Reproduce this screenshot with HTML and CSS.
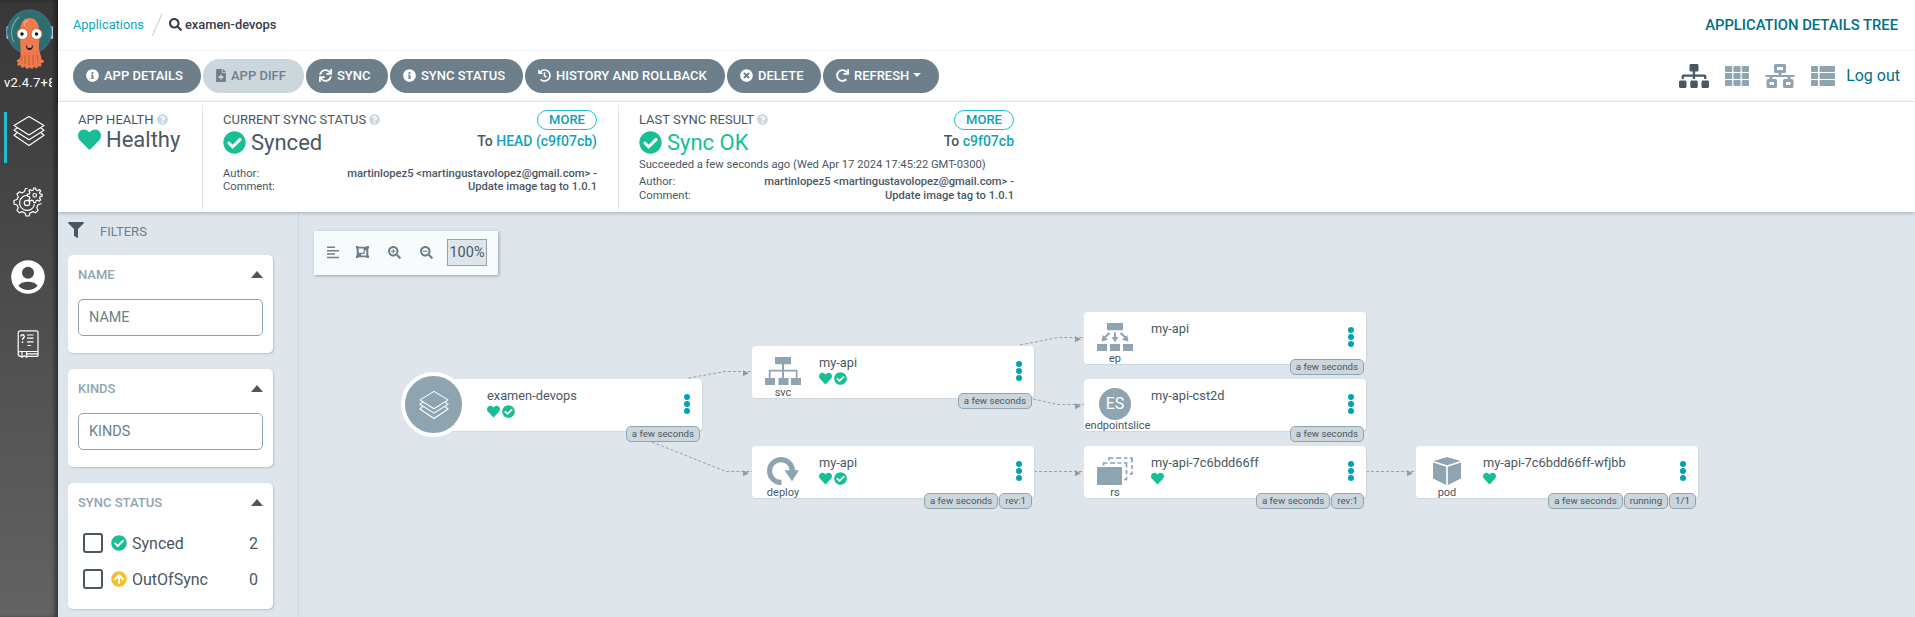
FILE: index.html
```html
<!DOCTYPE html>
<html lang="en">
<head>
<meta charset="utf-8">
<title>examen-devops - Application Details Tree</title>
<link rel="stylesheet" href="styles.css">
</head>
<body>
<svg class="defs" aria-hidden="true">
  <defs>
    <symbol id="info" viewBox="0 0 512 512"><path d="M256 8C119.043 8 8 119.083 8 256c0 136.997 111.043 248 248 248s248-111.003 248-248C504 119.083 392.957 8 256 8zm0 110c23.196 0 42 18.804 42 42s-18.804 42-42 42-42-18.804-42-42 18.804-42 42-42zm56 254c0 6.627-5.373 12-12 12h-88c-6.627 0-12-5.373-12-12v-24c0-6.627 5.373-12 12-12h12v-64h-12c-6.627 0-12-5.373-12-12v-24c0-6.627 5.373-12 12-12h64c6.627 0 12 5.373 12 12v100h12c6.627 0 12 5.373 12 12v24z"/></symbol>
    <symbol id="check" viewBox="0 0 512 512"><path d="M504 256c0 136.967-111.033 248-248 248S8 392.967 8 256 119.033 8 256 8s248 111.033 248 248zM227.314 387.314l184-184c6.248-6.248 6.248-16.379 0-22.627l-22.627-22.627c-6.248-6.249-16.379-6.249-22.628 0L216 308.118l-70.059-70.059c-6.248-6.248-16.379-6.248-22.628 0l-22.627 22.627c-6.248 6.248-6.248 16.379 0 22.627l104 104c6.249 6.249 16.379 6.249 22.628.001z"/></symbol>
    <symbol id="heart" viewBox="0 0 512 512"><path d="M462.3 62.6C407.5 15.9 326 24.3 275.7 76.2L256 96.5l-19.7-20.3C186.1 24.3 104.5 15.9 49.7 62.6c-62.8 53.6-66.1 149.8-9.9 207.9l193.5 199.8c12.5 12.9 32.8 12.9 45.3 0l193.5-199.8c56.3-58.1 53-154.3-9.8-207.9z"/></symbol>
    <symbol id="times" viewBox="0 0 512 512"><path d="M256 8C119 8 8 119 8 256s111 248 248 248 248-111 248-248S393 8 256 8zm121.6 313.1c4.7 4.7 4.7 12.3 0 17L338 377.6c-4.7 4.7-12.3 4.7-17 0L256 312l-65.1 65.6c-4.7 4.7-12.3 4.7-17 0L134.4 338c-4.7-4.7-4.7-12.3 0-17l65.6-65-65.6-65.1c-4.7-4.7-4.7-12.3 0-17l39.6-39.6c4.7-4.7 12.3-4.7 17 0l65 65.7 65.1-65.6c4.7-4.7 12.3-4.7 17 0l39.6 39.6c4.7 4.7 4.7 12.3 0 17L312 256l65.6 65.1z"/></symbol>
    <symbol id="search" viewBox="0 0 512 512"><path d="M505 442.7L405.3 343c-4.5-4.5-10.6-7-17-7H372c27.6-35.3 44-79.7 44-128C416 93.1 322.9 0 208 0S0 93.1 0 208s93.1 208 208 208c48.3 0 92.7-16.4 128-44v16.3c0 6.4 2.5 12.5 7 17l99.7 99.7c9.4 9.4 24.6 9.4 33.9 0l28.3-28.3c9.4-9.4 9.4-24.6.1-34zM208 336c-70.7 0-128-57.2-128-128 0-70.7 57.2-128 128-128 70.7 0 128 57.2 128 128 0 70.7-57.2 128-128 128z"/></symbol>
    <symbol id="question" viewBox="0 0 512 512"><path d="M504 256c0 136.997-111.043 248-248 248S8 392.997 8 256C8 119.083 119.043 8 256 8s248 111.083 248 248zM262.655 90c-54.497 0-89.255 22.957-116.549 63.758-3.536 5.286-2.353 12.415 2.715 16.258l34.699 26.31c5.205 3.947 12.621 3.008 16.665-2.122 17.864-22.658 30.113-35.797 57.303-35.797 20.429 0 45.698 13.148 45.698 32.958 0 14.976-12.363 22.667-32.534 33.976C247.128 238.528 216 254.941 216 296v4c0 6.627 5.373 12 12 12h56c6.627 0 12-5.373 12-12v-1.333c0-28.462 83.186-29.647 83.186-106.667 0-58.002-60.165-102-116.531-102zM256 338c-25.365 0-46 20.635-46 46 0 25.364 20.635 46 46 46s46-20.636 46-46c0-25.365-20.635-46-46-46z"/></symbol>
    <symbol id="filter" viewBox="0 0 512 512"><path d="M487.976 0H24.028C2.71 0-8.047 25.866 7.058 40.971L192 225.941V432c0 7.831 3.821 15.17 10.237 19.662l80 55.98C298.02 518.69 320 507.493 320 487.98V225.941l184.947-184.97C520.021 25.896 509.338 0 487.976 0z"/></symbol>
    <symbol id="sync" viewBox="0 0 512 512"><path d="M440.65 12.57l4 82.77A247.16 247.16 0 0 0 255.83 8C134.73 8 33.91 94.92 12.29 209.82A12 12 0 0 0 24.09 224h49.05a12 12 0 0 0 11.67-9.26 175.91 175.91 0 0 1 317-56.94l-101.46-4.86a12 12 0 0 0-12.57 12v47.41a12 12 0 0 0 12 12H500a12 12 0 0 0 12-12V12a12 12 0 0 0-12-12h-47.37a12 12 0 0 0-11.98 12.57zM255.83 432a175.61 175.61 0 0 1-146-77.8l101.8 4.87a12 12 0 0 0 12.57-12v-47.4a12 12 0 0 0-12-12H12a12 12 0 0 0-12 12V500a12 12 0 0 0 12 12h47.35a12 12 0 0 0 12-12.6l-4.15-82.57A247.17 247.17 0 0 0 255.83 504c121.11 0 221.93-86.92 243.55-201.82a12 12 0 0 0-11.8-14.18h-49.05a12 12 0 0 0-11.67 9.26A175.86 175.86 0 0 1 255.83 432z"/></symbol>
    <symbol id="redo" viewBox="0 0 512 512"><path d="M500.33 0h-47.41a12 12 0 0 0-12 12.57l4 82.76A247.42 247.42 0 0 0 256 8C119.34 8 7.9 119.53 8 256.19 8.1 393.07 119.1 504 256 504a247.1 247.1 0 0 0 166.18-63.91 12 12 0 0 0 .48-17.43l-34-34a12 12 0 0 0-16.38-.55A176 176 0 1 1 402.1 157.8l-101.53-4.87a12 12 0 0 0-12.57 12v47.41a12 12 0 0 0 12 12h200.33a12 12 0 0 0 12-12V12a12 12 0 0 0-12-12z"/></symbol>
    <symbol id="history" viewBox="0 0 512 512"><path d="M504 255.531c.253 136.64-111.18 248.372-247.82 248.468-59.015.042-113.223-20.53-155.822-54.911-11.077-8.94-11.905-25.541-1.839-35.607l11.267-11.267c8.609-8.609 22.353-9.551 31.891-1.984C173.062 425.135 212.781 440 256 440c101.705 0 184-82.311 184-184 0-101.705-82.311-184-184-184-48.814 0-93.149 18.969-126.068 49.932l50.754 50.754c10.08 10.08 2.941 27.314-11.313 27.314H24c-8.837 0-16-7.163-16-16V38.627c0-14.254 17.234-21.393 27.314-11.314l49.372 49.372C129.209 34.136 189.552 8 256 8c136.81 0 247.747 110.78 248 247.531zm-180.912 78.784l9.823-12.63c8.138-10.463 6.253-25.542-4.21-33.679L288 256.349V152c0-13.255-10.745-24-24-24h-16c-13.255 0-24 10.745-24 24v135.651l65.409 50.874c10.463 8.137 25.541 6.253 33.679-4.21z"/></symbol>
    <symbol id="file" viewBox="0 0 384 512"><path d="M377 105L279.1 7c-4.5-4.5-10.6-7-17-7H256v128h128v-6.1c0-6.3-2.5-12.4-7-16.9zm-153 31V0H24C10.7 0 0 10.7 0 24v464c0 13.3 10.7 24 24 24h336c13.3 0 24-10.7 24-24V160H248c-13.2 0-24-10.8-24-24zm64 160v48c0 4.4-3.6 8-8 8h-56v56c0 4.4-3.6 8-8 8h-48c-4.4 0-8-3.6-8-8v-56h-56c-4.4 0-8-3.6-8-8v-48c0-4.4 3.6-8 8-8h56v-56c0-4.4 3.6-8 8-8h48c4.4 0 8 3.6 8 8v56h56c4.4 0 8 3.6 8 8z"/></symbol>
    <symbol id="up" viewBox="0 0 512 512"><path d="M8 256C8 119 119 8 256 8s248 111 248 248-111 248-248 248S8 393 8 256zm143.6 28.9l72.4-75.5V392c0 13.3 10.7 24 24 24h16c13.3 0 24-10.7 24-24V209.4l72.4 75.5c9.3 9.7 24.8 9.9 34.3.4l10.9-11c9.4-9.4 9.4-24.6 0-33.9L273 107.7c-9.4-9.4-24.6-9.4-33.9 0L106.3 240.4c-9.4 9.4-9.4 24.6 0 33.9l10.9 11c9.6 9.5 25.1 9.3 34.4-.4z"/></symbol>
    <symbol id="sitemap" viewBox="0 0 640 512"><path d="M128 352H32c-17.67 0-32 14.33-32 32v96c0 17.67 14.33 32 32 32h96c17.67 0 32-14.33 32-32v-96c0-17.67-14.33-32-32-32zm-24-80h192v48h48v-48h192v48h48v-57.59c0-21.17-17.23-38.41-38.41-38.41H344v-64h40c17.67 0 32-14.33 32-32V32c0-17.67-14.33-32-32-32H256c-17.67 0-32 14.33-32 32v96c0 17.67 14.33 32 32 32h40v64H94.41C73.23 224 56 241.23 56 262.41V320h48v-48zm264 80h-96c-17.67 0-32 14.33-32 32v96c0 17.67 14.33 32 32 32h96c17.67 0 32-14.33 32-32v-96c0-17.67-14.33-32-32-32zm240 0h-96c-17.67 0-32 14.33-32 32v96c0 17.67 14.33 32 32 32h96c17.67 0 32-14.33 32-32v-96c0-17.67-14.33-32-32-32z"/></symbol>
    <symbol id="layers" viewBox="0 0 32 32"><g fill="none" stroke="currentColor" stroke-width="1.150" stroke-linejoin="round" stroke-linecap="round"><path d="M16 1.5 31 10.5 16 20 1 10.5Z"/><path d="M4 13 1 15.2 16 24.7 31 15.2 28 13"/><path d="M4 17.8 1 20.3 16 30.4 31 20.3 28 17.8"/></g></symbol>
    <symbol id="dots" viewBox="0 0 6 20"><circle cx="3" cy="3" r="3"/><circle cx="3" cy="10" r="3"/><circle cx="3" cy="17" r="3"/></symbol>
  </defs>
</svg>

<div class="app">
  <nav class="sidebar">
    <svg class="logo" viewBox="0 0 48 62" width="48" height="62">
      <rect x="0.5" y="17" width="4" height="13" rx="1.5" fill="#b5cde0"/><rect x="43" y="17" width="4" height="13" rx="1.5" fill="#b5cde0"/>
      <circle cx="23.5" cy="23" r="22" fill="#2c6f73" stroke="#4a7188" stroke-width="1"/>
      <path d="M8 33C3 24 6 14 13 8" fill="none" stroke="#7aa5a6" stroke-width="1.2"/>
      <path d="M14 24C14 13 18 9 23.500 9S33.500 13 33.500 24C33.500 34 32 39 34 44C35 48 36 49 35 50C38 51 40 54 35 54C36 57 35 59 32 57C32 60 29 60 28 57C28 60 25 61 24 58C22 61 19 60 19 57C17 60 14 59 15 56C11 58 10 55 13 53C10 54 10 51 13 50C16 48 14 40 14 24Z" fill="#ef7b4d"/>
      <path d="M19 46V55M23 46V56M27 46V56M31 46 32 54M16 46 15 52" stroke="#c7532f" stroke-width=".9" fill="none"/>
      <path d="M19 17C17 15 19 11 22 12" stroke="#f8a98a" stroke-width="1.500" fill="none"/>
      <circle cx="16.500" cy="25" r="5.500" fill="#fff" stroke="#df5e3b"/><circle cx="30.500" cy="25" r="5.500" fill="#fff" stroke="#df5e3b"/>
      <circle cx="16" cy="25" r="1.700" fill="#141414"/><circle cx="30.500" cy="25" r="1.700" fill="#141414"/>
      <path d="M20 36C22 38 25 38 27 36C27 39 25.500 41 23.500 41S20 39 20 36Z" fill="#1d1514"/><path d="M21.500 37.200Q23.500 38 25.500 37.200V38.500H21.500Z" fill="#fff"/>
    </svg>
    <div class="version">v2.4.7+8</div>
    <div class="nav-item active"><svg width="32" height="32"><use href="#layers"/></svg></div>
    <div class="nav-item settings">
      <svg class="line" width="30" height="30" viewBox="0 0 30 30" stroke-width="1.200" stroke-linejoin="round">
        <path d="M11.500 4.500 9 6 6.500 4.700 4 7 5.200 9.800 4 12.500 1 13.500V17L4 18 5.200 20.800 4 23.300 6.500 25.800 9 24.600 12 26 13 29H16L17 26 20 24.600 22.500 25.800 25 23.300 23.800 20.500 25 17.800 28.500 16.500M11.500 4.500 12.500 1.500H14.500"/>
        <path d="M15 8.500A7.500 7.500 0 1 0 21.500 17"/><circle cx="14" cy="16" r="2.700"/>
        <path d="M20.800 1h1.800l.5 2 1.500.7 1.800-1.200 1.300 1.300-1.200 1.800.6 1.300 2 .5v1.800l-2 .5-.6 1.500 1.200 1.700-1.300 1.300-1.800-1.100-1.500.6-.5 2h-1.800l-.5-2-1.500-.6-1.800 1.100-1.200-1.300 1.100-1.700-.6-1.500-2-.5V7.400l2-.5.6-1.300L15.800 3.800 17 2.500l1.800 1.200 1.500-.7z"/><circle cx="21.700" cy="8.300" r="1.800"/>
      </svg>
    </div>
    <div class="nav-item user">
      <svg width="34" height="34" viewBox="0 0 34 34"><circle cx="17" cy="17" r="16.800" fill="#fff"/><circle cx="17" cy="12.700" r="6" fill="#4a4a4a"/><path d="M17 21.800C21.500 21.800 25 23 26.500 25.800C24.500 28.500 21 30 17 30S9.500 28.500 7.500 25.800C9 23 12.500 21.800 17 21.800Z" fill="#4a4a4a"/></svg>
    </div>
    <div class="nav-item help">
      <svg class="line" width="22" height="28" viewBox="0 0 22 28" stroke-width="1.200">
        <path d="M3.500 .8H19.500Q21 .8 21 2.300V21.500H3.500Q1.200 21.700 1.200 24Q1.200 26.300 3.500 26.300H5M10 26.300H21M1.200 24V3Q1.200 .8 3.500 .8M9.500 23.900H21M21 21.500V26"/>
        <path d="M5 22V27.300L7.300 25.800 9.500 27.300V22"/>
        <path d="M10 5H16.500M10 8.200H16.500M10 11.800H16.500M10.500 15.500H14"/>
        <path d="M3.700 6.500Q4 4.700 5.500 4.700T7.300 6.500C7.300 8 5.500 7.800 5.500 9.800M5.500 11.300V13" stroke-width="1.400"/>
      </svg>
    </div>
  </nav>

  <main class="main">
    <header class="crumbs">
      <a class="crumb-link">Applications</a>
      <svg class="slash" width="12" height="24" viewBox="0 0 12 24"><path d="M11 .8 1.500 22.500" stroke="#ccd6dd" stroke-width="1.300"/></svg>
      <svg class="search-icon" width="13" height="13"><use href="#search"/></svg>
      <span class="crumb-current">examen-devops</span>
      <span class="page-title">APPLICATION DETAILS TREE</span>
    </header>

    <div class="toolbar">
      <div class="actions">
        <button class="btn b1"><svg width="13" height="13"><use href="#info"/></svg><span>APP DETAILS</span></button>
        <button class="btn b2 off"><svg width="10" height="13"><use href="#file"/></svg><span>APP DIFF</span></button>
        <button class="btn b3"><svg width="13" height="13"><use href="#sync"/></svg><span>SYNC</span></button>
        <button class="btn b4"><svg width="13" height="13"><use href="#info"/></svg><span>SYNC STATUS</span></button>
        <button class="btn b5"><svg width="13" height="13"><use href="#history"/></svg><span>HISTORY AND ROLLBACK</span></button>
        <button class="btn b6"><svg width="13" height="13"><use href="#times"/></svg><span>DELETE</span></button>
        <button class="btn b7"><svg width="13" height="13"><use href="#redo"/></svg><span>REFRESH</span><i class="caret"></i></button>
      </div>
      <div class="views">
        <svg class="view-on" width="30" height="24"><use href="#sitemap"/></svg>
        <svg width="24" height="24" viewBox="0 0 24 24"><g><rect y="2" width="7.200" height="6" rx="1"/><rect x="8.400" y="2" width="7.200" height="6" rx="1"/><rect x="16.800" y="2" width="7.200" height="6" rx="1"/><rect y="9" width="7.200" height="6" rx="1"/><rect x="8.400" y="9" width="7.200" height="6" rx="1"/><rect x="16.800" y="9" width="7.200" height="6" rx="1"/><rect y="16" width="7.200" height="6" rx="1"/><rect x="8.400" y="16" width="7.200" height="6" rx="1"/><rect x="16.800" y="16" width="7.200" height="6" rx="1"/></g></svg>
        <svg width="30" height="24" viewBox="0 0 30 24"><path fill-rule="evenodd" d="M10.500 0h9q1.500 0 1.500 1.500v6q0 1.500-1.500 1.500H16.500v2H29.500v2H25.500v2H27q1.500 0 1.500 1.500v6q0 1.500-1.500 1.500H19.500q-1.500 0-1.500-1.500v-6q0-1.500 1.500-1.500H22.500v-2H7.500v2H10.500q1.500 0 1.500 1.500v6q0 1.500-1.500 1.500H3q-1.500 0-1.500-1.500v-6q0-1.500 1.500-1.500H4.500v-2H.5v-2H13.500V9H10.500Q9 9 9 7.500v-6Q9 0 10.500 0zM12 3v3h6V3zM4.500 18v3H9v-3zM21 18v3h4.500v-3z"/></svg>
        <svg width="24" height="24" viewBox="0 0 24 24"><rect y="2" width="7" height="6" rx="1"/><rect x="8.500" y="2" width="15.500" height="6" rx="1"/><rect y="9" width="7" height="6" rx="1"/><rect x="8.500" y="9" width="15.500" height="6" rx="1"/><rect y="16" width="7" height="6" rx="1"/><rect x="8.500" y="16" width="15.500" height="6" rx="1"/></svg>
        <a class="logout">Log out</a>
      </div>
    </div>

    <section class="status">
      <div class="panel health">
        <div class="label">APP HEALTH <svg width="11" height="11"><use href="#question"/></svg></div>
        <div class="value"><svg class="green" width="23" height="23"><use href="#heart"/></svg><span>Healthy</span></div>
      </div>
      <div class="panel sync">
        <div class="row"><div class="label">CURRENT SYNC STATUS <svg width="11" height="11"><use href="#question"/></svg></div><span class="more">MORE</span></div>
        <div class="row"><div class="value"><svg class="green" width="23" height="23"><use href="#check"/></svg><span>Synced</span></div><div class="rev">To <a>HEAD (c9f07cb)</a></div></div>
        <div class="meta gap"><span>Author:</span><b>martinlopez5 &lt;martingustavolopez@gmail.com&gt; -</b></div>
        <div class="meta"><span>Comment:</span><b>Update image tag to 1.0.1</b></div>
      </div>
      <div class="panel last">
        <div class="row"><div class="label">LAST SYNC RESULT <svg width="11" height="11"><use href="#question"/></svg></div><span class="more">MORE</span></div>
        <div class="row"><div class="value ok"><svg class="green" width="23" height="23"><use href="#check"/></svg><span>Sync OK</span></div><div class="rev">To <a>c9f07cb</a></div></div>
        <div class="when">Succeeded a few seconds ago (Wed Apr 17 2024 17:45:22 GMT-0300)</div>
        <div class="meta tall"><span>Author:</span><b>martinlopez5 &lt;martingustavolopez@gmail.com&gt; -</b></div>
        <div class="meta tall"><span>Comment:</span><b>Update image tag to 1.0.1</b></div>
      </div>
    </section>

    <div class="body">
      <aside class="filters">
        <div class="filters-head"><svg width="16" height="16"><use href="#filter"/></svg><span>FILTERS</span></div>
        <div class="filter">
          <div class="filter-title"><span>NAME</span><i class="tri"></i></div>
          <div class="input">NAME</div>
        </div>
        <div class="filter">
          <div class="filter-title"><span>KINDS</span><i class="tri"></i></div>
          <div class="input">KINDS</div>
        </div>
        <div class="filter checks">
          <div class="filter-title"><span>SYNC STATUS</span><i class="tri"></i></div>
          <div class="check"><i class="box"></i><svg class="green" width="16" height="16"><use href="#check"/></svg><span>Synced</span><em>2</em></div>
          <div class="check"><i class="box"></i><svg class="yellow" width="16" height="16"><use href="#up"/></svg><span>OutOfSync</span><em>0</em></div>
        </div>
      </aside>

      <div class="canvas">
        <div class="zoombar">
          <svg width="13" height="13" viewBox="0 0 13 13"><path d="M0 .5h8v1.500H0zM0 3.900h12v1.500H0zM0 7.300h8v1.500H0zM0 10.700h12v1.500H0z"/></svg>
          <svg width="13" height="12" viewBox="0 0 13 12"><path fill-rule="evenodd" d="M0 0H2.500V.8H10.500V0H13V2.500H12.300V9.500H13V12H10.500V11.300H2.500V12H0V9.500H.7V2.500H0ZM2.700 2.500V6.800H7.500V2.500ZM8.600 4.600V8H5.200V9.400H10.300V4.600Z"/></svg>
          <svg width="13" height="13" viewBox="0 0 512 512"><use href="#search" width="512" height="512"/><path d="M187 119h42v68h68v42h-68v68h-42v-68h-68v-42h68z"/></svg>
          <svg width="13" height="13" viewBox="0 0 512 512"><use href="#search" width="512" height="512"/><path d="M119 187h178v42H119z"/></svg>
          <span class="pct">100%</span>
        </div>

        <svg class="edges" width="1616" height="405" viewBox="299 212 1616 405">
          <g fill="none" stroke="#8fa4b1" stroke-dasharray="3 2">
            <path d="M688.500 378 725 371.500H752"/><path d="M652 442 726 471.500H752"/>
            <path d="M1020 345 1058 337.500H1084"/><path d="M1033 399 1058 404.500H1084"/>
            <path d="M1034 471.500H1084"/><path d="M1366 471.500H1416"/>
          </g>
          <path fill="#999" d="M743 370.200v6l6-3zM743 470.200v6l6-3zM1075 336.200v6l6-3zM1075 403.200v6l6-3zM1075 470.200v6l6-3zM1407 470.200v6l6-3z"/>
        </svg>

        <article class="node root">
          <div class="orb"><svg width="30" height="30"><use href="#layers"/></svg></div>
          <div class="title">examen-devops</div>
          <div class="health-icons"><svg width="13" height="13"><use href="#heart"/></svg><svg width="13" height="13"><use href="#check"/></svg></div>
          <svg class="menu" width="6" height="20"><use href="#dots"/></svg>
          <div class="tags"><span>a few seconds</span></div>
        </article>

        <article class="node svc">
          <div class="kind"><svg width="36" height="28" viewBox="0 0 36 28"><path d="M10 0h16v7.300h-7v5.500h13.500V21H36v7H26v-7h4.800v-6.500H19V21h4.500v7h-10v-7H17v-6.500H5.500V21H10v7H0v-7h3.800v-8.200H17V7.300h-7z"/></svg><span>svc</span></div>
          <div class="title">my-api</div>
          <div class="health-icons"><svg width="13" height="13"><use href="#heart"/></svg><svg width="13" height="13"><use href="#check"/></svg></div>
          <svg class="menu" width="6" height="20"><use href="#dots"/></svg>
          <div class="tags"><span>a few seconds</span></div>
        </article>

        <article class="node deploy">
          <div class="kind"><svg width="36" height="28" viewBox="0 0 36 28"><path d="M16.500 28A14 14 0 1 1 30 13.300H34L27 24.300 19.500 13.300H24.700A8.800 8.800 0 1 0 16.500 22.800Z"/></svg><span>deploy</span></div>
          <div class="title">my-api</div>
          <div class="health-icons"><svg width="13" height="13"><use href="#heart"/></svg><svg width="13" height="13"><use href="#check"/></svg></div>
          <svg class="menu" width="6" height="20"><use href="#dots"/></svg>
          <div class="tags"><span>a few seconds</span><span>rev:1</span></div>
        </article>

        <article class="node ep">
          <div class="kind"><svg width="36" height="28" viewBox="0 0 36 28"><path d="M10 0h16v7.300H10zM0 21h10v7H0zM13 21h10v7H13zM26 21h10v7H26zM17 9.500h2V14h2.500L18 19.300 14.500 14H17zM11.500 9.200l1.800 1.500-4.500 4 2.200 2-6.500 1.800 1.300-6.500 1.700 1.500zM24.500 9.200l-1.800 1.500 4.500 4-2.200 2 6.500 1.800-1.300-6.500-1.700 1.500z"/></svg><span>ep</span></div>
          <div class="title">my-api</div>
          <svg class="menu" width="6" height="20"><use href="#dots"/></svg>
          <div class="tags"><span>a few seconds</span></div>
        </article>

        <article class="node es">
          <div class="kind"><div class="badge">ES</div><span class="long">endpointslice</span></div>
          <div class="title">my-api-cst2d</div>
          <svg class="menu" width="6" height="20"><use href="#dots"/></svg>
          <div class="tags"><span>a few seconds</span></div>
        </article>

        <article class="node rs">
          <div class="kind"><svg width="36" height="28" viewBox="0 0 36 28"><rect y="10" width="25" height="18"/><path fill="none" stroke="#8fa4b1" stroke-width="1.700" d="M6.500 8.500V6H10.500M13 6H18M20.500 6H24M27 6H29.500V10.500M29.500 13V17M29.500 20V22.500H27M12 3.500V1H16.500M19 1H24.500M27 1H30.500M33 1H35V5.500M35 8V12M35 14.500V17H32.500"/></svg><span>rs</span></div>
          <div class="title">my-api-7c6bdd66ff</div>
          <div class="health-icons"><svg width="13" height="13"><use href="#heart"/></svg></div>
          <svg class="menu" width="6" height="20"><use href="#dots"/></svg>
          <div class="tags"><span>a few seconds</span><span>rev:1</span></div>
        </article>

        <article class="node pod">
          <div class="kind"><svg width="36" height="28" viewBox="0 0 36 28"><path d="M18 0 31.500 4 18 8.300 4.500 4ZM4 5.600 17.200 9.700V28L4 21.500ZM32 5.600 18.800 9.700V28L32 21.500Z"/></svg><span>pod</span></div>
          <div class="title">my-api-7c6bdd66ff-wfjbb</div>
          <div class="health-icons"><svg width="13" height="13"><use href="#heart"/></svg></div>
          <svg class="menu" width="6" height="20"><use href="#dots"/></svg>
          <div class="tags"><span>a few seconds</span><span>running</span><span>1/1</span></div>
        </article>
      </div>
    </div>
  </main>
</div>
</body>
</html>
```

FILE: styles.css
```css
* { box-sizing: border-box; }
body { margin: 0; font-family: Roboto, "Liberation Sans", sans-serif; font-size: 13px; color: #495763; overflow: hidden; }
svg { display: block; fill: currentColor; flex: none; }
.defs { position: absolute; width: 0; height: 0; }
.app { display: flex; height: 617px; }

.sidebar { width: 58px; flex: none; background: linear-gradient(#373737, #636363); box-shadow: inset -4px 0 4px -1px rgba(0,0,0,.45); display: flex; flex-direction: column; align-items: center; padding-top: 9px; padding-right: 2px; color: #fff; }
.logo { margin-left: 3px; }
.version { width: 48px; height: 20px; line-height: 23px; overflow: hidden; white-space: nowrap; letter-spacing: .25px; align-self: flex-start; margin-left: 4px; }
.nav-item { width: 58px; height: 52px; display: flex; align-items: center; justify-content: center; align-self: flex-start; padding-right: 2px; }
.nav-item.active { margin-top: 21px; height: 51px; border-left: 3px solid #1fbdd0; width: 54px; margin-left: 4px; padding-right: 7px; padding-bottom: 13px; }
.settings { margin-top: 13px; }
.user { margin-top: 23px; }
.help { margin-top: 15px; }
.line { fill: none; stroke: #fff; }

.main { flex: 1; display: flex; flex-direction: column; min-width: 0; }
.crumbs { height: 51px; flex: none; display: flex; align-items: center; padding: 0 17px 1px 15px; border-bottom: 1px solid #eff1f3; }
.crumb-link { color: #0fa5b6; font-size: 12.800px; }
.slash { margin: 0 6px 0 7px; }
.search-icon { color: #363c4a; margin-right: 3px; }
.crumb-current { font-weight: 500; font-size: 12.900px; color: #363c4a; }
.page-title { margin-left: auto; font-size: 14.800px; font-weight: 500; color: #006f8a; }

.toolbar { height: 51px; flex: none; display: flex; align-items: center; justify-content: space-between; padding: 0 15px; border-bottom: 1px solid #eff1f3; }
.actions { display: flex; gap: 2px; }
.btn { height: 34px; border: 0; border-radius: 17px; background: #6d7f8b; color: #fff; font: 500 13px Roboto, sans-serif; display: flex; align-items: center; padding: 0 0 2px 13px; gap: 5px; white-space: nowrap; }
.off { background: #ccd6dd; color: #6d7f8b; }
.b1 { width: 128px; } .b2 { width: 101px; } .b3 { width: 82px; } .b4 { width: 133px; } .b5 { width: 200px; } .b6 { width: 94px; } .b7 { width: 116px; }
.caret { border: 4px solid transparent; border-top: 4px solid #fff; border-bottom: 0; margin-left: -1px; }
.views { display: flex; align-items: center; color: #8fa4b1; padding-bottom: 1px; }
.views svg { margin-right: 16px; }
.views svg:nth-child(4) { margin-right: 11px; }
.view-on { color: #495763; }
.logout { font-size: 16px; color: #006f8a; }

.status { height: 110px; flex: none; display: flex; padding: 3px 0 2px 5px; box-shadow: 0 1px 4px rgba(70,90,105,.4); position: relative; z-index: 2; background: #fff; }
.panel { border-right: 1px solid #dee6eb; padding-top: 5px; }
.health { width: 140px; padding-left: 15px; }
.health .value { margin-top: -2px; }
.sync { width: 416px; padding: 5px 21px 0 20px; }
.last { width: 415px; padding: 5px 20px 0; border: 0; }
.row { display: flex; justify-content: space-between; }
.label { display: flex; gap: 3px; align-items: center; height: 19px; white-space: nowrap; }
.label svg { color: #ccd6dd; }
.more { width: 60px; height: 20px; border: 1px solid #1fbdd0; border-radius: 10px; color: #0fa0b2; font-weight: 500; text-align: center; line-height: 18px; }
.value { display: flex; align-items: center; gap: 5px; font-size: 22px; height: 24px; white-space: nowrap; }
.ok, .green { color: #18be94; }
.yellow { color: #f4c030; }
.rev { font-size: 14px; font-weight: 500; line-height: 23px; }
.rev a { color: #0fa5b6; }
.meta { display: flex; justify-content: space-between; font-size: 11.200px; line-height: 13px; white-space: nowrap; }
.meta b { font-weight: 500; }
.gap { margin-top: 13px; }
.when { font-size: 11.200px; line-height: 13px; margin: 4px 0; white-space: nowrap; }
.tall { line-height: 14px; }

.body { flex: 1; display: flex; background: #dee6eb; min-height: 0; }
.filters { width: 241px; flex: none; border-right: 1px solid #ccd6dd; padding: 10px 25px 0 10px; }
.filters-head { display: flex; gap: 16px; height: 17px; line-height: 19px; color: #6d7f8b; margin-bottom: 16px; }
.filters-head svg { color: #495763; }
.filter { background: #fff; border-radius: 5px; box-shadow: 1px 1px 2px rgba(70,90,105,.25); height: 98px; padding: 10px; margin-bottom: 16px; }
.checks { height: 126px; }
.filter-title { display: flex; justify-content: space-between; align-items: center; height: 19px; color: #8fa4b1; font-weight: 500; }
.tri { border: 6px solid transparent; border-bottom: 7px solid #495763; border-top: 0; }
.input { margin-top: 15px; height: 37px; border: 1px solid #8fa4b1; border-radius: 5px; padding-left: 10px; line-height: 35px; font-size: 14.400px; color: #6d7f8b; }
.check { display: flex; align-items: center; height: 36px; padding: 0 5px; font-size: 16px; }
.filter-title + .check { margin-top: 13px; }
.box { width: 20px; height: 20px; border: 2px solid #495763; border-radius: 3px; margin-right: 8px; }
.check span { margin-left: 5px; }
.check em { margin-left: auto; font-style: normal; }

.canvas { flex: 1; position: relative; }
.zoombar { position: absolute; left: 15px; top: 19px; width: 184px; height: 44px; background: #f8fbfb; box-shadow: 1px 1px 3px #8fa4b1; display: flex; align-items: center; padding: 0 11px 2px 13px; color: #6d7f8b; }
.zoombar svg { margin-right: 19px; }
.zoombar svg:nth-child(1) { margin-right: 16px; }
.zoombar svg:nth-child(4) { margin-right: 14px; }
.pct { width: 40px; height: 27px; border: 1px solid #8fa4b1; background: #dee6eb; font-size: 14.500px; line-height: 25px; text-align: center; color: #495763; }
.edges { position: absolute; left: 0; top: 0; }

.node { position: absolute; width: 282px; height: 52px; background: #fff; border-radius: 4px; box-shadow: 1px 1px 1px #ccd6dd; padding: 10px 0 0 67px; }
.root { left: 121px; top: 167px; }
.svc { left: 453px; top: 134px; }
.deploy { left: 453px; top: 234px; }
.ep { left: 785px; top: 100px; }
.es { left: 785px; top: 167px; }
.rs { left: 785px; top: 234px; }
.pod { left: 1117px; top: 234px; }
.title { line-height: 13px; height: 16px; font-size: 12.800px; white-space: nowrap; }
.health-icons { display: flex; gap: 2px; color: #18be94; }
.menu { position: absolute; left: 264px; top: 15px; color: #00a2b3; }
.kind { position: absolute; left: 0; top: 0; width: 62px; height: 52px; padding-top: 11px; display: flex; flex-direction: column; align-items: center; color: #8fa4b1; }
.kind span { color: #495763; font-size: 11px; line-height: 15px; }
.kind .long { margin-left: 5px; }
.badge { width: 32px; height: 32px; border-radius: 50%; background: #8fa4b1; color: #fff; font-size: 16px; line-height: 32px; text-align: center; margin: -2px 0 -2px; }
.orb { position: absolute; left: -19px; top: -7px; width: 65px; height: 65px; border-radius: 50%; border: 4px solid #fff; background: #8fa4b1; color: #fff; display: flex; align-items: center; justify-content: center; }
.tags { position: absolute; right: 2px; bottom: -11px; display: flex; gap: 1px; }
.tags span { height: 16px; border: 1px solid #8fa4b1; border-radius: 5px; background: #ccd6dd; font-size: 9.700px; line-height: 14px; padding: 0 5px; white-space: nowrap; }
```
